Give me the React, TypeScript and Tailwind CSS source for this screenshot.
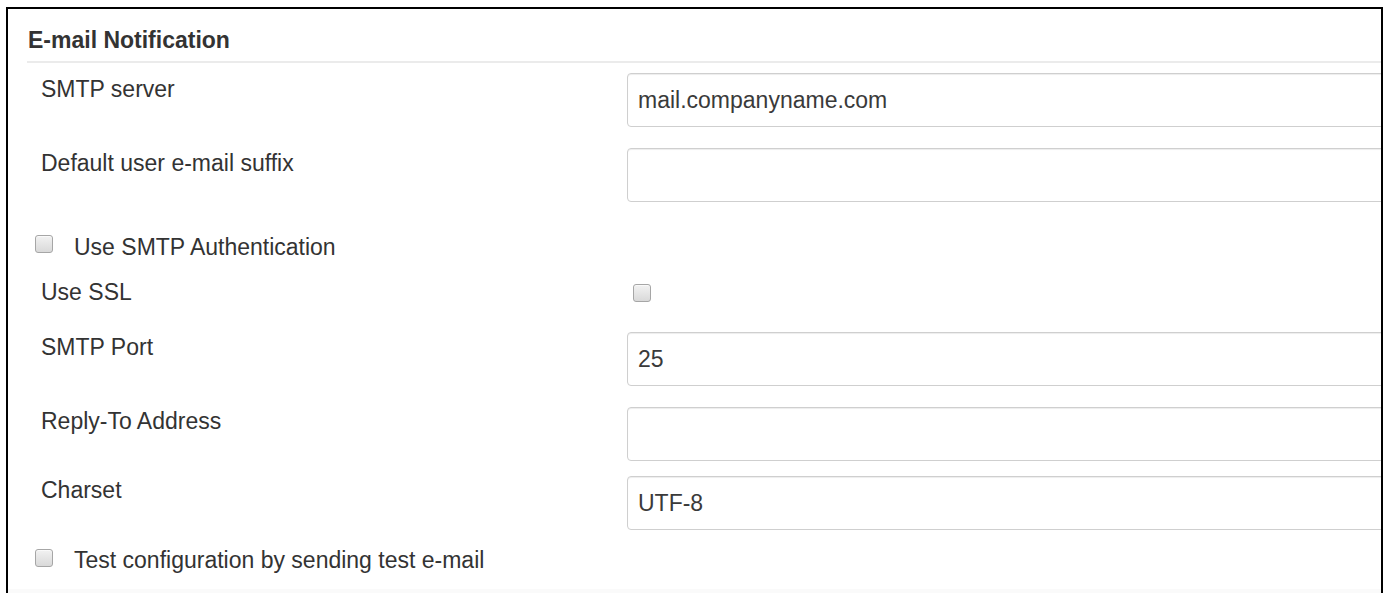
import type { ReactNode } from "react";

const font = { fontFamily: '"Liberation Sans", Arial, sans-serif' };

const Checkbox = ({ className = "" }: { className?: string }) => (
  <span
    className={`block w-[18px] h-[18px] shrink-0 rounded-[3px] border border-[#a6a6a6] bg-linear-to-b from-[#f2f2f2] to-[#d9d9d9] shadow-[inset_0_1px_0_rgba(255,255,255,0.6)] ${className}`}
  />
);

const TextField = ({ value = "" }: { value?: string }) => (
  <div className="w-[800px] shrink-0 h-[54px] rounded-[4px] border border-[#cfcfcf] bg-white shadow-[inset_0_1px_1px_rgba(0,0,0,0.075)] flex items-center px-[10px] text-[#3a3a3a]">
    {value}
  </div>
);

const FieldRow = ({
  label,
  labelPad,
  className = "",
  children,
}: {
  label: string;
  labelPad: string;
  className?: string;
  children: ReactNode;
}) => (
  <div className={`flex ${className}`}>
    <div className={`w-[600px] shrink-0 pl-[14px] ${labelPad}`}>{label}</div>
    {children}
  </div>
);

export default function App() {
  return (
    <div
      className="h-[593px] bg-white pt-[7px] pl-[6px] pr-[7px] text-[23px] leading-[26px] text-[#333]"
      style={font}
    >
      <div className="h-full border-2 border-b-0 border-black overflow-hidden">
        <div className="pl-[19px]">
          {/* section header */}
          <div className="pt-[18px] pb-[8px] pl-[1px] border-b-2 border-[#ebebeb] font-bold">
            E-mail Notification
          </div>

          <FieldRow label="SMTP server" labelPad="pt-[3px]" className="mt-[10px]">
            <TextField value="mail.companyname.com" />
          </FieldRow>

          <FieldRow label="Default user e-mail suffix" labelPad="pt-[2px]" className="mt-[21px]">
            <TextField />
          </FieldRow>

          <label className="flex items-start pl-[8px] mt-[32px]">
            <Checkbox className="mt-[1px]" />
            <span className="ml-[21px]">Use SMTP Authentication</span>
          </label>

          <FieldRow label="Use SSL" labelPad="" className="mt-[19px]">
            <Checkbox className="mt-[5px] ml-[6px]" />
          </FieldRow>

          <FieldRow label="SMTP Port" labelPad="pt-[2px]" className="mt-[27px]">
            <TextField value="25" />
          </FieldRow>

          <FieldRow label="Reply-To Address" labelPad="pt-[1px]" className="mt-[21px]">
            <TextField />
          </FieldRow>

          <FieldRow label="Charset" labelPad="pt-[1px]" className="mt-[15px]">
            <TextField value="UTF-8" />
          </FieldRow>

          <label className="flex items-start pl-[8px] mt-[17px]">
            <Checkbox className="mt-[2px]" />
            <span className="ml-[21px]">Test configuration by sending test e-mail</span>
          </label>
        </div>
        <div className="mt-[16px] h-[10px] bg-[#fafafa]" />
      </div>
    </div>
  );
}
